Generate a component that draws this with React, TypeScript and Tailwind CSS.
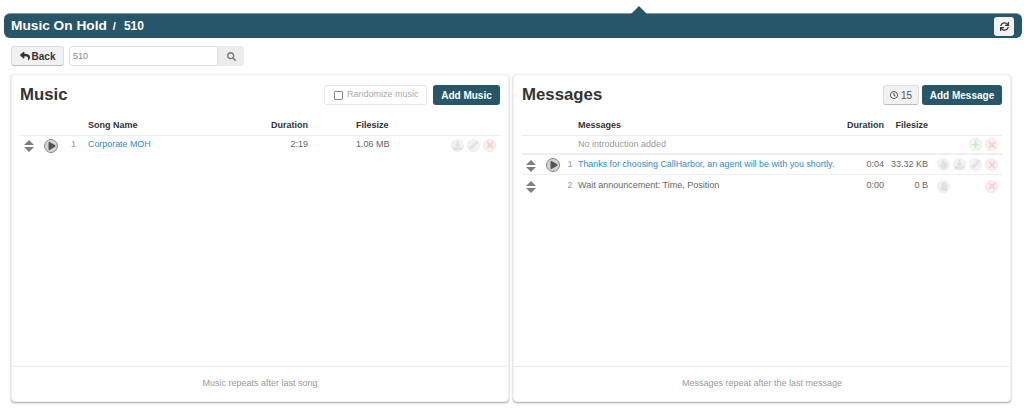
import React from "react";
import { FaReply, FaSearch, FaSync, FaRegClock, FaDownload, FaPencilAlt, FaTimes, FaPlus, FaHandPaper, FaPlay } from "react-icons/fa";

const Sorter = () => (
  <div className="flex flex-col items-center gap-[2px] w-[10px] mt-[2px]">
    <div className="w-0 h-0 border-x-[5px] border-x-transparent border-b-[5px] border-b-[#808080]" />
    <div className="w-0 h-0 border-x-[5px] border-x-transparent border-t-[5px] border-t-[#808080]" />
  </div>
);

const Play = ({ className = "" }: { className?: string }) => (
  <div className={`flex items-center justify-center w-[14px] h-[14px] rounded-full bg-[#d4d4d4] border border-[#888] text-[#555] ${className}`}>
    <FaPlay className="text-[8px] ml-px" />
  </div>
);

const RoundIcon = ({ children, red, green }: { children: React.ReactNode; red?: boolean; green?: boolean }) => (
  <div
    className={`flex items-center justify-center w-[13px] h-[13px] rounded-full border ${
      red
        ? "bg-[#fbf0f0] border-[#f6e6e6] text-[#f7cfcf] text-[10px]"
        : green
          ? "bg-[#f0f7f0] border-[#e6f0e6] text-[#cbe8cb] text-[9px]"
          : "bg-[#f3f3f3] border-[#ededed] text-[#e0e0e0] text-[9px]"
    }`}
  >
    {children}
  </div>
);

const Blank = () => <div className="w-[13px] h-[13px]" />;

const Panel = ({
  title,
  actions,
  footer,
  children,
}: {
  title: string;
  actions: React.ReactNode;
  footer: string;
  children: React.ReactNode;
}) => (
  <section className="flex-1 basis-0 min-w-0 flex flex-col h-[328px] bg-white rounded-[4px] border border-[#f0f0f0] shadow-[0_1px_2px_rgba(0,0,0,0.35)]">
    <div className="flex-1 px-[8px]">
      <div className="flex items-center justify-between h-[40px]">
        <h2 className="text-[16.8px] font-bold text-[#333]">{title}</h2>
        {actions}
      </div>
      {children}
    </div>
    <div className="h-[35px] border-t border-[#eaeaea] flex items-center justify-center text-[9px] text-[#999]">
      {footer}
    </div>
  </section>
);

const DarkButton = ({ children, className }: { children: React.ReactNode; className: string }) => (
  <button className={`h-[20px] rounded-[3px] bg-[#265668] text-white text-[10px] font-bold ${className}`}>
    {children}
  </button>
);

export default function App() {
  return (
    <div
      className="w-[1024px] h-[412px] bg-white overflow-hidden flex flex-col px-[11px] pt-[13px]"
      style={{ fontFamily: '"Liberation Sans", Arial, sans-serif' }}
    >
      {/* title bar */}
      <header className="relative -ml-[7px] -mr-[9px] h-[25px] shrink-0 bg-[#265668] rounded-[6px] border-t border-[#7f9ba6] flex items-center justify-between pl-[7px] pr-[8px] text-white">
        <div className="absolute top-[-8px] left-[627px] w-0 h-0 border-x-[8px] border-x-transparent border-b-[8px] border-b-[#265668]" />
        <div className="font-bold flex items-center">
          <span className="text-[13.7px]">Music On Hold</span>
          <span className="text-[11px] ml-[6px]">/</span>
          <span className="text-[12px] ml-[8px]">510</span>
        </div>
        <button className="w-[20px] h-[19px] rounded-[3px] bg-[#f2f2f2] flex items-center justify-center text-[#333] text-[9px]">
          <FaSync />
        </button>
      </header>

      {/* toolbar */}
      <div className="flex items-center h-[20px] mt-[8px] shrink-0">
        <button className="flex items-center gap-[2px] h-[20px] w-[53px] justify-center rounded-[3px] border border-[#ddd] border-b-[#bbb] bg-[#f2f2f2] text-[10px] font-bold text-[#333]">
          <FaReply className="text-[10px]" />
          Back
        </button>
        <div className="flex ml-[5px]">
          <input
            readOnly
            value="510"
            className="w-[149px] h-[20px] border border-[#ddd] rounded-l-[3px] px-[3px] text-[9px] text-[#888] outline-none"
          />
          <div className="w-[26px] h-[20px] bg-[#ececec] rounded-r-[3px] flex items-center justify-center text-[#777] text-[9px]">
            <FaSearch />
          </div>
        </div>
      </div>

      <div className="flex gap-[4px] mt-[8px] pr-[2px]">
        <Panel
          title="Music"
          footer="Music repeats after last song"
          actions={
            <div className="flex items-center gap-[6px]">
              <label className="flex items-center h-[20px] w-[103px] pl-[9px] gap-[4px] border border-[#e6e6e6] rounded-[3px] text-[9px] text-[#aaa]">
                <span className="w-[9px] h-[9px] border border-[#888] rounded-[1px]" />
                Randomize music
              </label>
              <DarkButton className="w-[67px]">Add Music</DarkButton>
            </div>
          }
        >
          <div className="grid grid-cols-[24px_20px_24px_170px_50px_minmax(0,1fr)_50px] text-[9px] h-[21px] items-center border-b border-[#eee] font-bold text-[#333] pt-[1px]">
            <span className="col-start-4">Song Name</span>
            <span className="text-right">Duration</span>
            <span className="pl-[48px]">Filesize</span>
          </div>
          <div className="grid grid-cols-[24px_20px_24px_170px_50px_minmax(0,1fr)_50px] text-[9px] h-[19px] pb-[1px] items-center text-[#666]">
            <div className="pl-[4px]"><Sorter /></div>
            <Play className="mt-[2px]" />
            <span className="text-center text-[#999] pr-[5px]">1</span>
            <span className="text-[#2e8bc9] text-[8.9px]">Corporate MOH</span>
            <span className="text-right">2:19</span>
            <span className="pl-[48px]">1.06 MB</span>
            <div className="flex justify-end gap-[3px] pr-[4px]">
              <RoundIcon><FaDownload /></RoundIcon>
              <RoundIcon><FaPencilAlt /></RoundIcon>
              <RoundIcon red><FaTimes /></RoundIcon>
            </div>
          </div>
        </Panel>

        <Panel
          title="Messages"
          footer="Messages repeat after the last message"
          actions={
            <div className="flex items-center gap-[3px]">
              <button className="flex items-center justify-center gap-[3px] h-[20px] w-[36px] bg-[#f2f2f2] border border-[#ddd] border-b-[#bbb] rounded-[3px] text-[10px] text-[#555]">
                <FaRegClock className="text-[8px] text-[#333]" />
                15
              </button>
              <DarkButton className="w-[80px]">Add Message</DarkButton>
            </div>
          }
        >
          <div className="grid grid-cols-[24px_20px_12px_minmax(0,1fr)_50px_44px_74px] text-[9px] h-[21px] items-center border-b border-[#eee] font-bold text-[#333] pt-[1px]">
            <span className="col-start-4">Messages</span>
            <span className="text-right">Duration</span>
            <span className="text-right">Filesize</span>
          </div>
          <div className="grid grid-cols-[24px_20px_12px_minmax(0,1fr)_50px_44px_74px] text-[9px] h-[19px] items-center text-[#999] border-b-2 border-[#eee]">
            <span className="col-start-4">No introduction added</span>
            <div className="col-start-7 flex justify-end gap-[3px] pr-[4px]">
              <RoundIcon green><FaPlus /></RoundIcon>
              <RoundIcon red><FaTimes /></RoundIcon>
            </div>
          </div>
          <div className="grid grid-cols-[24px_20px_12px_minmax(0,1fr)_50px_44px_74px] text-[9px] h-[20px] items-center text-[#666] border-b border-[#eee]">
            <div className="pl-[4px]"><Sorter /></div>
            <Play />
            <span className="text-center text-[#999] pr-[4px]">1</span>
            <span className="text-[#2e8bc9] text-[8.9px] whitespace-nowrap">Thanks for choosing CallHarbor, an agent will be with you shortly.</span>
            <span className="text-right">0:04</span>
            <span className="text-right whitespace-nowrap">33.32 KB</span>
            <div className="flex justify-end gap-[3px] pr-[4px]">
              <RoundIcon><FaHandPaper /></RoundIcon>
              <RoundIcon><FaDownload /></RoundIcon>
              <RoundIcon><FaPencilAlt /></RoundIcon>
              <RoundIcon red><FaTimes /></RoundIcon>
            </div>
          </div>
          <div className="grid grid-cols-[24px_20px_12px_minmax(0,1fr)_50px_44px_74px] text-[9px] h-[21px] pt-[1px] items-center text-[#666]">
            <div className="pl-[4px]"><Sorter /></div>
            <span />
            <span className="text-center text-[#999] pr-[4px]">2</span>
            <span>Wait announcement: Time, Position</span>
            <span className="text-right">0:00</span>
            <span className="text-right">0 B</span>
            <div className="flex justify-end gap-[3px] pr-[4px]">
              <RoundIcon><FaHandPaper /></RoundIcon>
              <Blank />
              <Blank />
              <RoundIcon red><FaTimes /></RoundIcon>
            </div>
          </div>
        </Panel>
      </div>
    </div>
  );
}
